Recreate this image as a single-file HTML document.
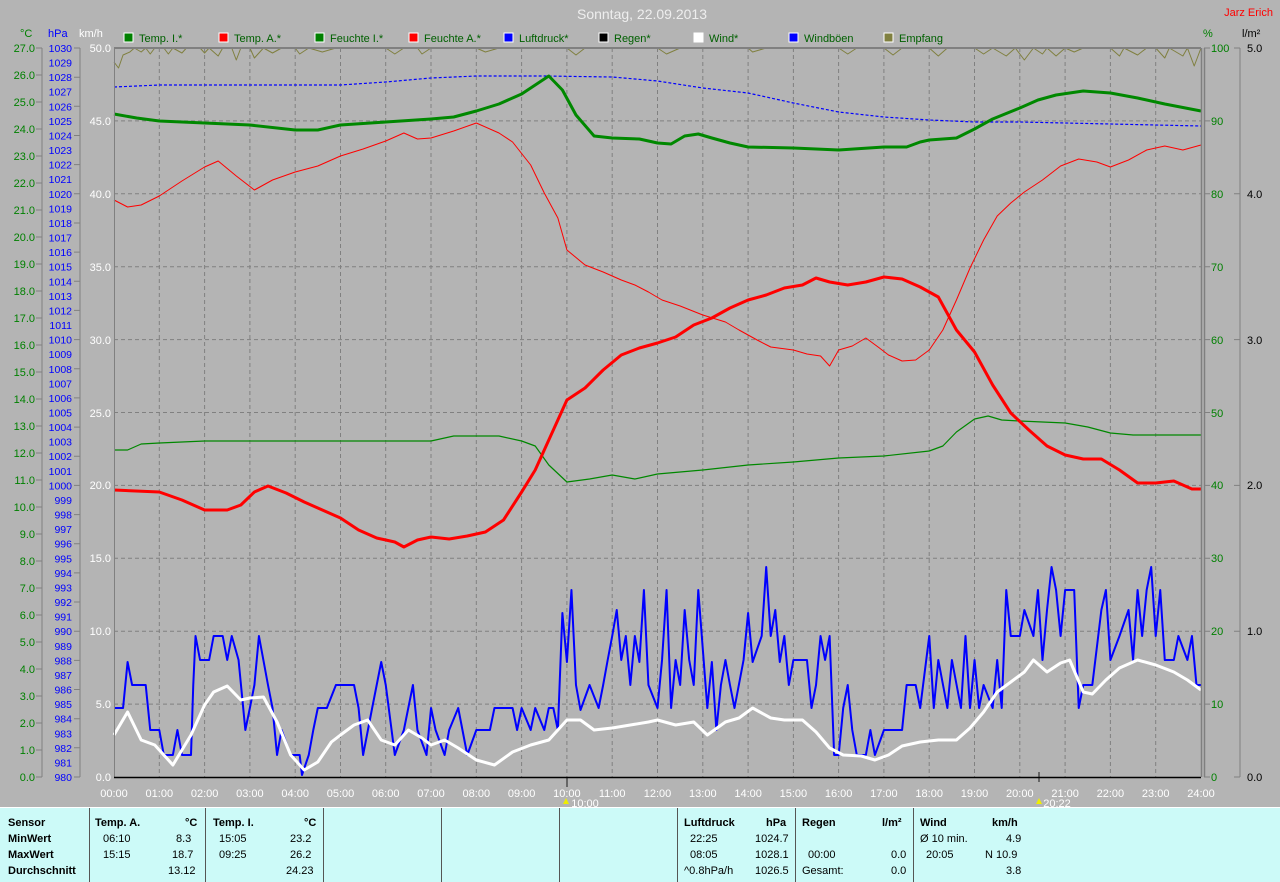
<!DOCTYPE html>
<html><head><meta charset="utf-8"><style>
body{margin:0;background:#b4b4b4;width:1280px;height:881px;overflow:hidden;font-family:"Liberation Sans",sans-serif}
svg{position:absolute;left:0;top:0}
.tb{position:absolute;left:0;top:807px;width:1280px;height:74px;background:#ccfaf8;border-top:1px solid #fff;font-size:11px;font-weight:bold;color:#000}
.c{position:absolute;top:0;height:74px;border-left:1px solid #555}
.t{position:absolute;white-space:pre;font-size:11px}
.n{font-weight:normal}
</style></head><body>
<svg width="1280" height="808" font-family="Liberation Sans, sans-serif" font-size="11">
<text x="642" y="19" fill="#eee" font-size="14" text-anchor="middle">Sonntag, 22.09.2013</text>
<text x="1273" y="16" fill="#f00" font-size="11" text-anchor="end">Jarz Erich</text>
<g font-size="11">
<text x="20" y="37" fill="#008000">°C</text><text x="48" y="37" fill="#00f">hPa</text><text x="79" y="37" fill="#fff">km/h</text>
<text x="1203" y="37" fill="#008000">%</text><text x="1242" y="37" fill="#000">l/m²</text>
</g>
<g font-size="11" fill="#006000">
<rect x="124" y="33" width="9" height="9" fill="#008000" stroke="#fff"/><text x="139" y="42">Temp. I.*</text>
<rect x="219" y="33" width="9" height="9" fill="#f00" stroke="#fff"/><text x="234" y="42">Temp. A.*</text>
<rect x="315" y="33" width="9" height="9" fill="#008000" stroke="#fff"/><text x="330" y="42">Feuchte I.*</text>
<rect x="409" y="33" width="9" height="9" fill="#f00" stroke="#fff"/><text x="424" y="42">Feuchte A.*</text>
<rect x="504" y="33" width="9" height="9" fill="#00f" stroke="#fff"/><text x="519" y="42">Luftdruck*</text>
<rect x="599" y="33" width="9" height="9" fill="#000" stroke="#fff"/><text x="614" y="42">Regen*</text>
<rect x="694" y="33" width="9" height="9" fill="#fff" stroke="#fff"/><text x="709" y="42">Wind*</text>
<rect x="789" y="33" width="9" height="9" fill="#00f" stroke="#fff"/><text x="804" y="42">Windböen</text>
<rect x="884" y="33" width="9" height="9" fill="#808040" stroke="#fff"/><text x="899" y="42">Empfang</text>
</g>
<!-- grid -->
<g stroke="#808080" stroke-dasharray="4,3" stroke-width="1">
<path d="M114 120.9H1201M114 193.8H1201M114 266.7H1201M114 339.6H1201M114 412.5H1201M114 485.4H1201M114 558.3H1201M114 631.2H1201M114 704.1H1201"/>
<path d="M159.3 48V777M204.6 48V777M249.9 48V777M295.2 48V777M340.5 48V777M385.7 48V777M431 48V777M476.3 48V777M521.6 48V777M566.9 48V777M612.2 48V777M657.5 48V777M702.8 48V777M748.1 48V777M793.4 48V777M838.6 48V777M883.9 48V777M929.2 48V777M974.5 48V777M1019.8 48V777M1065.1 48V777M1110.4 48V777M1155.7 48V777"/>
</g>
<!-- axes -->
<g stroke="#808080" stroke-width="1" fill="none">
<path d="M42 48V777M80 48V777M1240 48V777"/>
<path d="M36 48h6M36 75h6M36 102h6M36 129h6M36 156h6M36 183h6M36 210h6M36 237h6M36 264h6M36 291h6M36 318h6M36 345h6M36 372h6M36 399h6M36 426h6M36 453h6M36 480h6M36 507h6M36 534h6M36 561h6M36 588h6M36 615h6M36 642h6M36 669h6M36 696h6M36 723h6M36 750h6M36 777h6"/>
<path d="M74 48h6M74 77.2h6M74 106.3h6M74 135.5h6M74 164.6h6M74 193.8h6M74 223h6M74 252.1h6M74 281.3h6M74 310.4h6M74 339.6h6M74 368.8h6M74 397.9h6M74 427.1h6M74 456.2h6M74 485.4h6M74 514.6h6M74 543.7h6M74 572.9h6M74 602h6M74 631.2h6M74 660.4h6M74 689.5h6M74 718.7h6M74 747.8h6M74 777h6"/>
<path d="M1204 48h6M1204 120.9h6M1204 193.8h6M1204 266.7h6M1204 339.6h6M1204 412.5h6M1204 485.4h6M1204 558.3h6M1204 631.2h6M1204 704.1h6M1204 777h6"/>
<path d="M1234 48h6M1234 193.8h6M1234 339.6h6M1234 485.4h6M1234 631.2h6M1234 777h6"/>
</g>
<g fill="#008000" text-anchor="end">
<text x="35" y="52">27.0</text><text x="35" y="79">26.0</text><text x="35" y="106">25.0</text><text x="35" y="133">24.0</text><text x="35" y="160">23.0</text><text x="35" y="187">22.0</text><text x="35" y="214">21.0</text><text x="35" y="241">20.0</text><text x="35" y="268">19.0</text><text x="35" y="295">18.0</text><text x="35" y="322">17.0</text><text x="35" y="349">16.0</text><text x="35" y="376">15.0</text><text x="35" y="403">14.0</text><text x="35" y="430">13.0</text><text x="35" y="457">12.0</text><text x="35" y="484">11.0</text><text x="35" y="511">10.0</text><text x="35" y="538">9.0</text><text x="35" y="565">8.0</text><text x="35" y="592">7.0</text><text x="35" y="619">6.0</text><text x="35" y="646">5.0</text><text x="35" y="673">4.0</text><text x="35" y="700">3.0</text><text x="35" y="727">2.0</text><text x="35" y="754">1.0</text><text x="35" y="781">0.0</text>
</g>
<g fill="#00f" text-anchor="end" font-size="10.5">
<text x="72" y="52">1030</text><text x="72" y="66.6">1029</text><text x="72" y="81.2">1028</text><text x="72" y="95.7">1027</text><text x="72" y="110.3">1026</text><text x="72" y="124.9">1025</text><text x="72" y="139.5">1024</text><text x="72" y="154.1">1023</text><text x="72" y="168.6">1022</text><text x="72" y="183.2">1021</text><text x="72" y="197.8">1020</text><text x="72" y="212.4">1019</text><text x="72" y="227">1018</text><text x="72" y="241.5">1017</text><text x="72" y="256.1">1016</text><text x="72" y="270.7">1015</text><text x="72" y="285.3">1014</text><text x="72" y="299.9">1013</text><text x="72" y="314.4">1012</text><text x="72" y="329">1011</text><text x="72" y="343.6">1010</text><text x="72" y="358.2">1009</text><text x="72" y="372.8">1008</text><text x="72" y="387.3">1007</text><text x="72" y="401.9">1006</text><text x="72" y="416.5">1005</text><text x="72" y="431.1">1004</text><text x="72" y="445.7">1003</text><text x="72" y="460.2">1002</text><text x="72" y="474.8">1001</text><text x="72" y="489.4">1000</text><text x="72" y="504">999</text><text x="72" y="518.6">998</text><text x="72" y="533.1">997</text><text x="72" y="547.7">996</text><text x="72" y="562.3">995</text><text x="72" y="576.9">994</text><text x="72" y="591.5">993</text><text x="72" y="606">992</text><text x="72" y="620.6">991</text><text x="72" y="635.2">990</text><text x="72" y="649.8">989</text><text x="72" y="664.4">988</text><text x="72" y="678.9">987</text><text x="72" y="693.5">986</text><text x="72" y="708.1">985</text><text x="72" y="722.7">984</text><text x="72" y="737.3">983</text><text x="72" y="751.8">982</text><text x="72" y="766.4">981</text><text x="72" y="781">980</text>
</g>
<g fill="#fff" text-anchor="end">
<text x="111" y="52">50.0</text><text x="111" y="125">45.0</text><text x="111" y="198">40.0</text><text x="111" y="271">35.0</text><text x="111" y="344">30.0</text><text x="111" y="417">25.0</text><text x="111" y="489">20.0</text><text x="111" y="562">15.0</text><text x="111" y="635">10.0</text><text x="111" y="708">5.0</text><text x="111" y="781">0.0</text>
</g>
<g fill="#008000">
<text x="1211" y="52">100</text><text x="1211" y="125">90</text><text x="1211" y="198">80</text><text x="1211" y="271">70</text><text x="1211" y="344">60</text><text x="1211" y="417">50</text><text x="1211" y="489">40</text><text x="1211" y="562">30</text><text x="1211" y="635">20</text><text x="1211" y="708">10</text><text x="1211" y="781">0</text>
</g>
<g fill="#000">
<text x="1247" y="52">5.0</text><text x="1247" y="198">4.0</text><text x="1247" y="344">3.0</text><text x="1247" y="489">2.0</text><text x="1247" y="635">1.0</text><text x="1247" y="781">0.0</text>
</g>
<g fill="#fff" text-anchor="middle">
<text x="114" y="797">00:00</text><text x="159.3" y="797">01:00</text><text x="204.6" y="797">02:00</text><text x="249.9" y="797">03:00</text><text x="295.2" y="797">04:00</text><text x="340.5" y="797">05:00</text><text x="385.7" y="797">06:00</text><text x="431" y="797">07:00</text><text x="476.3" y="797">08:00</text><text x="521.6" y="797">09:00</text><text x="566.9" y="797">10:00</text><text x="612.2" y="797">11:00</text><text x="657.5" y="797">12:00</text><text x="702.8" y="797">13:00</text><text x="748.1" y="797">14:00</text><text x="793.4" y="797">15:00</text><text x="838.6" y="797">16:00</text><text x="883.9" y="797">17:00</text><text x="929.2" y="797">18:00</text><text x="974.5" y="797">19:00</text><text x="1019.8" y="797">20:00</text><text x="1065.1" y="797">21:00</text><text x="1110.4" y="797">22:00</text><text x="1155.7" y="797">23:00</text><text x="1201" y="797">24:00</text>
<text x="585" y="807">10:00</text><text x="1057" y="807">20:22</text>
</g>
<path d="M566 798l-3 6h6z" fill="#ee0"/><path d="M1039 798l-3 6h6z" fill="#ee0"/>
<path d="M567 777v10M1039 772v10" stroke="#666" stroke-width="2"/>
<!-- data -->
<g transform="translate(114,0) scale(45.292,1)" fill="none" stroke-linejoin="round">
<polyline vector-effect="non-scaling-stroke" stroke="#808040" stroke-width="1" points="0,62 0.1,68 0.2,55 0.35,52 0.45,48 0.6,52 0.7,48 0.8,54 0.9,48 1.1,48 1.2,54 1.3,48 1.5,53 1.6,48 1.9,48 2,53 2.1,48 2.3,56 2.4,48 2.6,48 2.7,60 2.8,48 3,48 3.1,58 3.3,48 3.5,53 3.7,48 4,48 4.1,54 4.3,48 4.6,52 4.9,48 6,48 6.2,54 6.4,48 6.7,48 6.8,54 7,48 8,48 8.2,52 8.5,48 10,48 10.2,55 10.4,48 12,48 12.2,54 12.5,48 14,48 14.1,52 14.4,48 16,48 16.2,54 16.4,48 17,48 17.2,55 17.4,48 18,48 18.2,56 18.4,48 19,48 19.2,54 19.4,48 19.7,56 19.9,48 20.1,60 20.3,48 20.5,54 20.6,48 20.8,56 21,48 21.2,52 21.4,48 22,48 22.2,56 22.3,48 22.6,55 22.8,48 23,48 23.2,58 23.3,48 23.6,56 23.7,48 23.85,66 24,48"/>
<polyline vector-effect="non-scaling-stroke" stroke="#00f" stroke-width="1.2" stroke-dasharray="3,2" points="0,87 1,85 3,85 5,85 6,82 7,78 8,76 9.5,76 11,77 12,81 13,88 14,93 15,103 16,112 17,117 18,120 19,122 20,122 22,124 24,126"/>
<polyline vector-effect="non-scaling-stroke" stroke="#080" stroke-width="1.2" points="0,450 0.3,450 0.6,444 1,443 2,441 7,441 7.5,436 8.5,436 9,441 9.3,446 9.6,465 10,482 10.5,479 11,475 11.5,479 12,474 13,470 14,465 15,462 16,458 17,456 18,451 18.3,446 18.6,432 19,419 19.3,416 19.6,420 20,421 21,423 21.5,427 22,433 22.5,435 24,435"/>
<polyline vector-effect="non-scaling-stroke" stroke="#f00" stroke-width="1" points="0,200 0.3,207 0.6,205 1,196 1.5,181 2,167 2.3,161 2.7,176 3.1,190 3.5,180 4,172 4.5,166 5,156 5.5,149 6,141 6.4,133 6.7,139 7,138 7.5,131 8,123 8.5,133 8.8,142 9.2,165 9.5,193 9.8,218 10,250 10.4,265 10.8,272 11.2,280 11.5,285 11.8,292 12.1,300 12.5,306 13,315 13.5,322 13.8,330 14.2,340 14.5,347 15,350 15.3,354 15.6,356 15.8,366 16,350 16.3,346 16.6,338 16.9,348 17.1,355 17.4,361 17.7,360 18,350 18.3,330 18.6,300 18.9,268 19.2,240 19.5,216 19.8,203 20.1,192 20.5,180 20.9,166 21.3,159 21.7,162 22,167 22.4,160 22.8,150 23.2,146 23.6,150 24,145"/>
<polyline vector-effect="non-scaling-stroke" stroke="#080" stroke-width="3" points="0,114 0.5,118 1,121 2,123 3,125 4,130 4.5,130 5,125 6,122 7,119 7.5,117 8,111 8.5,104 9,94 9.3,85 9.6,76 9.9,90 10.2,115 10.6,136 11,138 11.6,139 12,143 12.3,144 12.6,136 12.9,134 13.2,138 13.6,143 14,147 15,148 15.5,149 16,150 17,147 17.5,147 17.8,142 18,140 18.6,138 19,129 19.4,119 20,108 20.4,100 20.8,95 21.4,91 22,93 22.6,98 23.2,104 24,111"/>
<polyline vector-effect="non-scaling-stroke" stroke="#f00" stroke-width="3" points="0,490 1,492 1.5,500 2,510 2.5,510 2.8,505 3.1,492 3.4,486 3.8,493 4.2,502 4.6,510 5,518 5.4,530 5.8,538 6.2,542 6.4,547 6.7,540 7,537 7.4,539 7.8,536 8.2,532 8.6,520 9,492 9.3,470 9.6,440 10,400 10.4,388 10.8,370 11.2,355 11.6,348 12,343 12.4,337 12.8,325 13.2,318 13.6,308 14,300 14.4,295 14.8,288 15.2,285 15.5,278 15.8,282 16.2,285 16.6,282 17,277 17.4,279 17.8,287 18.2,297 18.6,330 19,352 19.4,385 19.8,413 20.2,430 20.6,446 21,455 21.4,459 21.8,459 22.2,470 22.6,483 23,483 23.4,481 23.8,489 24,489"/>
<polyline vector-effect="non-scaling-stroke" stroke="#00f" stroke-width="2" points="0,708 0.2,708 0.3,662 0.4,685 0.7,685 0.8,730 1,730 1.1,755 1.3,755 1.4,730 1.5,755 1.7,755 1.75,685 1.8,636 1.9,660 2.1,660 2.2,636 2.4,636 2.5,660 2.6,636 2.75,660 2.9,730 3,708 3.1,685 3.2,636 3.4,685 3.5,708 3.6,755 3.7,730 3.9,755 4.1,755 4.15,775 4.3,755 4.4,730 4.5,708 4.7,708 4.9,685 5.3,685 5.4,708 5.5,755 5.7,708 5.9,662 6,685 6.2,755 6.4,730 6.6,685 6.7,730 6.9,755 7,708 7.1,730 7.3,755 7.4,730 7.6,708 7.8,755 8,730 8.3,730 8.4,708 8.8,708 8.9,730 9,708 9.2,730 9.3,708 9.5,730 9.6,708 9.7,708 9.8,730 9.9,613 10,662 10.1,590 10.2,685 10.3,710 10.5,685 10.7,708 10.8,685 10.9,660 11,636 11.1,610 11.2,660 11.3,636 11.4,685 11.5,636 11.6,662 11.7,590 11.8,685 12,708 12.1,660 12.2,590 12.3,708 12.4,660 12.5,685 12.6,610 12.7,660 12.8,685 12.9,590 13.1,708 13.2,662 13.3,730 13.4,685 13.5,660 13.6,685 13.7,708 13.9,660 14,613 14.1,662 14.3,636 14.4,567 14.5,636 14.6,610 14.7,662 14.8,636 14.9,685 15,660 15.3,660 15.4,708 15.5,685 15.6,636 15.7,660 15.8,636 15.9,755 16,755 16.1,708 16.2,685 16.3,730 16.4,755 16.6,755 16.7,730 16.8,755 17,730 17.4,730 17.5,685 17.7,685 17.8,708 18,636 18.1,708 18.2,660 18.4,708 18.5,660 18.7,708 18.8,636 18.9,708 19,660 19.1,708 19.2,685 19.4,708 19.5,660 19.6,708 19.7,590 19.8,636 20,636 20.1,610 20.3,636 20.4,590 20.5,660 20.6,610 20.7,567 20.8,590 20.9,636 21,590 21.2,590 21.3,708 21.4,685 21.6,685 21.8,610 21.9,590 22,660 22.2,636 22.4,610 22.5,660 22.6,590 22.7,636 22.8,590 22.9,567 23,636 23.1,590 23.2,660 23.4,660 23.5,636 23.7,660 23.8,636 23.9,685 24,685"/>
<polyline vector-effect="non-scaling-stroke" stroke="#fff" stroke-width="3" points="0,735 0.3,712 0.6,740 0.9,745 1.3,765 1.5,750 1.7,735 2,705 2.2,692 2.5,686 2.8,700 3,698 3.3,697 3.6,722 3.9,755 4.2,770 4.5,762 4.8,742 5,735 5.3,725 5.6,720 5.9,740 6.2,745 6.5,730 6.8,738 7,745 7.3,740 7.6,748 8,760 8.4,765 8.8,752 9.2,745 9.6,740 10,720 10.3,720 10.6,730 11,728 11.4,725 11.8,722 12,720 12.4,725 12.8,722 13.1,735 13.5,722 13.8,718 14.1,708 14.5,718 14.8,720 15.2,720 15.5,732 15.8,748 16.1,755 16.5,756 16.8,760 17.1,755 17.4,746 17.8,742 18.2,740 18.6,740 18.9,728 19.2,712 19.5,692 19.8,682 20.1,672 20.3,660 20.6,672 20.9,663 21.1,660 21.4,692 21.6,694 21.9,680 22.2,668 22.6,660 23,665 23.4,672 23.7,680 24,690"/>
</g>
<!-- frame -->
<path d="M114 48H1201" stroke="#808080" stroke-width="2"/>
<path d="M114.5 48V777" stroke="#808080" stroke-width="1"/>
<path d="M114 777.5H1201" stroke="#000" stroke-width="1.5"/>
<path d="M1201.5 48V777M1204.5 48V777" stroke="#808080" stroke-width="1.5"/>
</svg>
<div class="tb">
<div class="c" style="left:89px"></div><div class="c" style="left:205px"></div><div class="c" style="left:323px"></div><div class="c" style="left:441px"></div><div class="c" style="left:559px"></div><div class="c" style="left:677px"></div><div class="c" style="left:795px"></div><div class="c" style="left:913px"></div>
<div class="t" style="left:8px;top:9px">Sensor</div><div class="t" style="left:8px;top:25px">MinWert</div><div class="t" style="left:8px;top:41px">MaxWert</div><div class="t" style="left:8px;top:57px">Durchschnitt</div>
<div class="t" style="left:95px;top:9px">Temp. A.</div><div class="t" style="left:185px;top:9px">°C</div>
<div class="t n" style="left:103px;top:25px">06:10</div><div class="t n" style="left:176px;top:25px">8.3</div>
<div class="t n" style="left:103px;top:41px">15:15</div><div class="t n" style="left:172px;top:41px">18.7</div>
<div class="t n" style="left:168px;top:57px">13.12</div>
<div class="t" style="left:213px;top:9px">Temp. I.</div><div class="t" style="left:304px;top:9px">°C</div>
<div class="t n" style="left:219px;top:25px">15:05</div><div class="t n" style="left:290px;top:25px">23.2</div>
<div class="t n" style="left:219px;top:41px">09:25</div><div class="t n" style="left:290px;top:41px">26.2</div>
<div class="t n" style="left:286px;top:57px">24.23</div>
<div class="t" style="left:684px;top:9px">Luftdruck</div><div class="t" style="left:766px;top:9px">hPa</div>
<div class="t n" style="left:690px;top:25px">22:25</div><div class="t n" style="left:755px;top:25px">1024.7</div>
<div class="t n" style="left:690px;top:41px">08:05</div><div class="t n" style="left:755px;top:41px">1028.1</div>
<div class="t n" style="left:684px;top:57px">^0.8hPa/h</div><div class="t n" style="left:755px;top:57px">1026.5</div>
<div class="t" style="left:802px;top:9px">Regen</div><div class="t" style="left:882px;top:9px">l/m²</div>
<div class="t n" style="left:808px;top:41px">00:00</div><div class="t n" style="left:891px;top:41px">0.0</div>
<div class="t n" style="left:802px;top:57px">Gesamt:</div><div class="t n" style="left:891px;top:57px">0.0</div>
<div class="t" style="left:920px;top:9px">Wind</div><div class="t" style="left:992px;top:9px">km/h</div>
<div class="t n" style="left:920px;top:25px">Ø 10 min.</div><div class="t n" style="left:1006px;top:25px">4.9</div>
<div class="t n" style="left:926px;top:41px">20:05</div><div class="t n" style="left:985px;top:41px">N 10.9</div>
<div class="t n" style="left:1006px;top:57px">3.8</div>
</div>
</body></html>
